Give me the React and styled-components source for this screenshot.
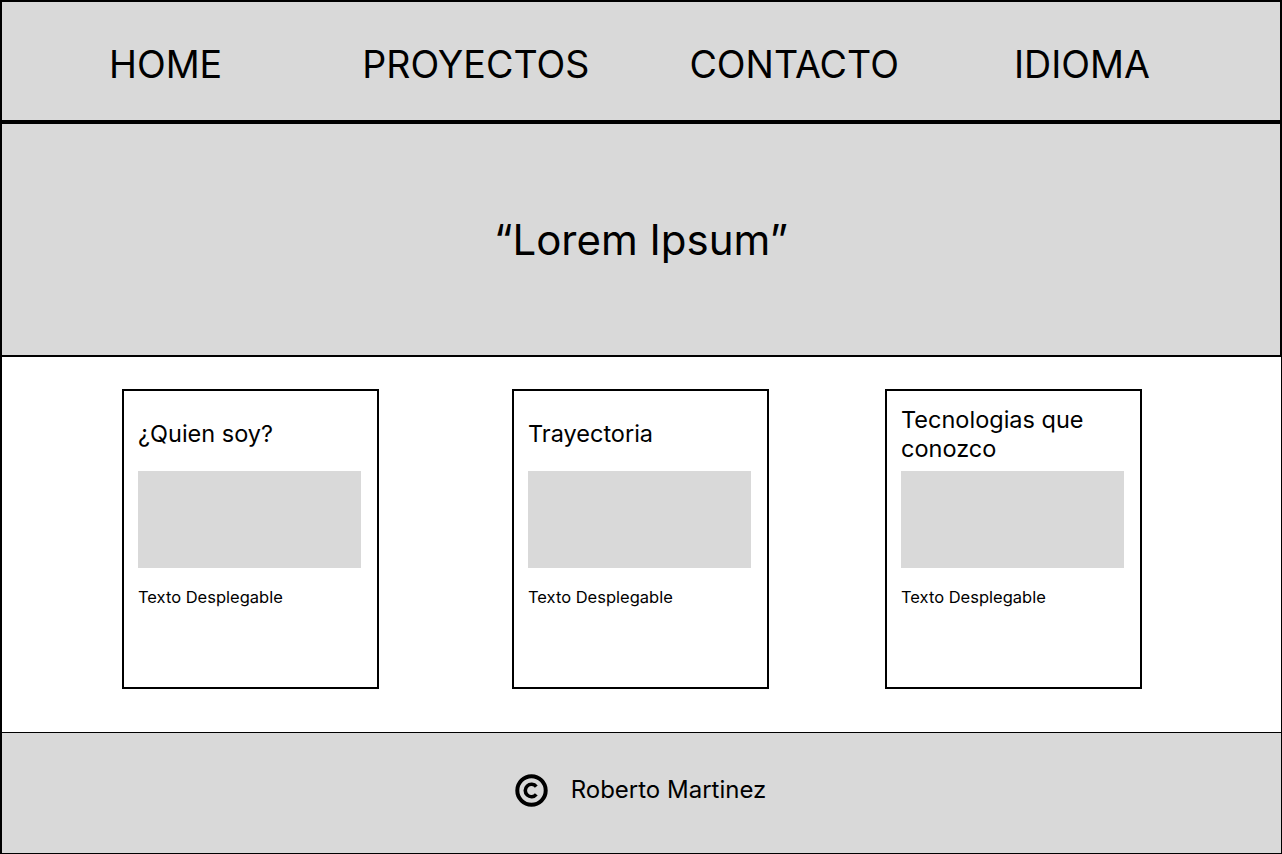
import React from "react"
import styled, { createGlobalStyle } from "styled-components"

const GlobalStyle = createGlobalStyle`
  * {
    box-sizing: border-box;
  }
  body {
    margin: 0;
    background: #ffffff;
    font-family: Inter, "Noto Sans", sans-serif;
    color: #000000;
  }
`

const Page = styled.div`
  width: 1282px;
  height: 854px;
  display: flex;
  flex-direction: column;
`

const Header = styled.header`
  height: 122px;
  background-color: #d9d9d9;
  border: 2px solid #000;
  display: flex;
  align-items: center;
  padding-left: 107px;
  padding-top: 8px;
`

const NavItem = styled.a`
  font-size: 37.6px;
  font-weight: 400;
  line-height: 1;
  color: #000;
  text-decoration: none;
  margin-left: ${(p) => p.$offset || 0}px;
`

const Hero = styled.section`
  height: 235px;
  background-color: #d9d9d9;
  border: 2px solid #000;
  display: flex;
  justify-content: center;
  align-items: center;
`

const HeroTitle = styled.h1`
  margin: 0;
  font-size: 42px;
  font-weight: 400;
  line-height: 1;
`

const Main = styled.main`
  height: 375px;
  border-left: 2px solid #000;
  border-right: 1px solid #000;
  display: flex;
  align-items: flex-start;
  padding-top: 32px;
  padding-left: 120px;
`

const Card = styled.article`
  width: 257px;
  height: 300px;
  border: 2px solid #000;
  margin-left: ${(p) => p.$offset || 0}px;
  padding: 6px 15px 0 14px;
  display: flex;
  flex-direction: column;
`

const CardTitle = styled.h2`
  margin: 0 0 1px;
  height: 73px;
  display: flex;
  align-items: center;
  font-size: 23.5px;
  font-weight: 400;
  line-height: 29px;
`

const Placeholder = styled.div`
  width: 223px;
  height: 97px;
  background-color: #d9d9d9;
`

const CardText = styled.p`
  margin: 20px 0 0;
  font-size: 16.5px;
  line-height: 18px;
`

const Footer = styled.footer`
  height: 122px;
  background-color: #d9d9d9;
  border: 1px solid #000;
  border-left-width: 2px;
  display: flex;
  align-items: center;
  justify-content: center;
  gap: 23px;
  padding-right: 2px;
  padding-bottom: 6px;
`

const FooterText = styled.span`
  font-size: 24px;
  line-height: 1;
`

const CopyIcon = () => (
  <svg width="33" height="33" viewBox="0 0 33 33" fill="none">
    <circle cx="16.5" cy="16.5" r="14.2" stroke="#000" strokeWidth="4" />
    <path
      d="M21.3 12.6a6.2 6.2 0 1 0 0 7.8"
      stroke="#000"
      strokeWidth="3.6"
      strokeLinecap="butt"
    />
  </svg>
)

const navItems = [
  { label: "HOME", offset: 0 },
  { label: "PROYECTOS", offset: 140 },
  { label: "CONTACTO", offset: 100 },
  { label: "IDIOMA", offset: 115 },
]

const cards = [
  { title: "¿Quien soy?", offset: 0 },
  { title: "Trayectoria", offset: 133 },
  { title: "Tecnologias que conozco", offset: 116 },
]

export default function App() {
  return (
    <>
      <GlobalStyle />
      <Page>
        <Header>
          {navItems.map((item) => (
            <NavItem key={item.label} $offset={item.offset}>
              {item.label}
            </NavItem>
          ))}
        </Header>
        <Hero>
          <HeroTitle>“Lorem Ipsum”</HeroTitle>
        </Hero>
        <Main>
          {cards.map((card) => (
            <Card key={card.title} $offset={card.offset}>
              <CardTitle>{card.title}</CardTitle>
              <Placeholder />
              <CardText>Texto Desplegable</CardText>
            </Card>
          ))}
        </Main>
        <Footer>
          <CopyIcon />
          <FooterText>Roberto Martinez</FooterText>
        </Footer>
      </Page>
    </>
  )
}
